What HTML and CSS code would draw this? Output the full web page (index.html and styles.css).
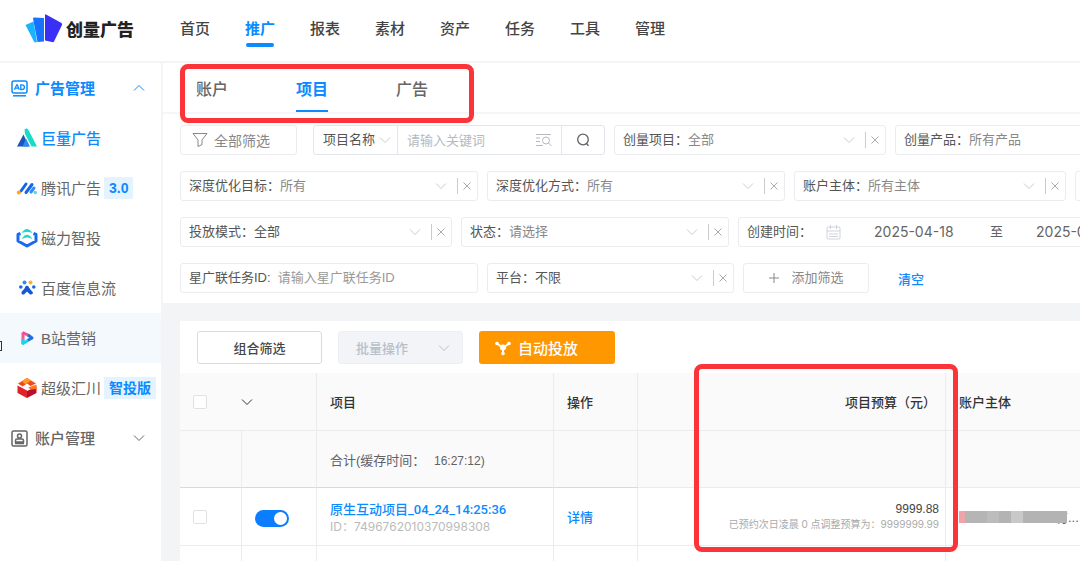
FILE: index.html
```html
<!DOCTYPE html>
<html lang="zh-CN">
<head>
  <meta charset="UTF-8" />
  <meta name="viewport" content="width=device-width, initial-scale=1" />
  <title>创量广告</title>
  <link rel="stylesheet" href="styles.css">
</head>
<body>

<!-- shared line icons -->
<svg class="sprite" aria-hidden="true">
  <symbol id="down" viewBox="0 0 12 12"><path d="M1 3.5l5 5 5-5" fill="none" stroke="currentColor"/></symbol>
  <symbol id="close" viewBox="0 0 12 12"><path d="M2.5 2.5l7 7M9.5 2.5l-7 7" fill="none" stroke="currentColor"/></symbol>
</svg>

<header class="topbar">
  <a class="logo" href="#">
    <svg width="38" height="30" viewBox="0 0 38 30" aria-hidden="true">
      <path d="M0.500 11L8.500 7.500L12 28L9.500 28.500z" fill="#18b4ff"/>
      <path d="M8 4.500Q8 3.500 9 3.500L19 4V27.500L12.500 28z" fill="#1672ff"/>
      <path d="M20 0.800Q20 0 21 0.500L36.500 9Q37.500 9.800 37 11L29 27.500Q28.500 28.500 27 28L20 26.500z" fill="#3a30f5"/>
    </svg>
    <span>创量广告</span>
  </a>
  <nav class="main-nav">
    <a href="#">首页</a>
    <a href="#" class="active">推广</a>
    <a href="#">报表</a>
    <a href="#">素材</a>
    <a href="#">资产</a>
    <a href="#">任务</a>
    <a href="#">工具</a>
    <a href="#">管理</a>
  </nav>
</header>

<div class="layout">
  <aside class="sidebar">
    <span class="edge-mark"></span>
    <button class="group open" type="button">
      <svg width="17" height="17" viewBox="0 0 17 17" fill="none" stroke="currentColor" stroke-width="1.500" aria-hidden="true">
        <rect x="1" y="1" width="15" height="12" rx="2"/>
        <path d="M2 15.800h13"/>
        <path d="M3.500 9.800l2.200-5h.600l2 5M4.500 8.200h3M9.800 4.800v4.700h1.200c3.200 0 3.200-4.700 0-4.700z" stroke-width="1.300"/>
      </svg>
      <span>广告管理</span>
      <svg class="arrow up" width="12" height="12"><use href="#down"/></svg>
    </button>
    <a class="item active" href="#">
      <svg width="22" height="22" viewBox="0 0 22 22" aria-hidden="true">
        <path d="M8.500 2.500Q10.500 0.500 12.500 3L21 19.500H15.500L9 7z" fill="#17dcc6"/>
        <path d="M1 19.500L7.500 7.500L13 19.500z" fill="#1c54b8"/>
        <path d="M6.500 19.500L10 11.500L14 19.500z" fill="#2b8bf0"/>
      </svg>
      <span>巨量广告</span>
    </a>
    <a class="item" href="#">
      <svg width="22" height="22" viewBox="0 0 22 22" fill="none" stroke-linecap="round" stroke-width="3" aria-hidden="true">
        <path d="M5 14l5-7M10 15.500l6-8" stroke="#1565e8"/>
        <path d="M15 15l3-4" stroke="#2b8df5"/>
        <circle cx="2.800" cy="15.500" r="2" fill="#ffa51f"/>
        <circle cx="19.300" cy="15.500" r="1.700" fill="#55d5f5"/>
      </svg>
      <span>腾讯广告</span>
      <em class="tag">3.0</em>
    </a>
    <a class="item" href="#">
      <svg width="22" height="22" viewBox="0 0 22 22" fill="none" stroke-linejoin="round" aria-hidden="true">
        <path d="M4.500 6.500L2 7.500V14L11 19L20 14V7.500L17.500 6.500" stroke="#1769f2" stroke-width="3"/>
        <path d="M5.500 6Q11-2 16.500 6Q11 4 5.500 6z" fill="#22d9cb"/>
        <path d="M5.500 12Q11 3.500 16.500 12Q11 9 5.500 12z" fill="#22d9cb"/>
      </svg>
      <span>磁力智投</span>
    </a>
    <a class="item" href="#">
      <svg width="22" height="22" viewBox="0 0 22 22" aria-hidden="true">
        <circle cx="8.500" cy="5.500" r="2" fill="#2d8cf0"/>
        <circle cx="14.500" cy="5.500" r="2" fill="#ffb02e"/>
        <circle cx="4.800" cy="10" r="1.800" fill="#1769e8"/>
        <circle cx="17.800" cy="10" r="1.800" fill="#1769e8"/>
        <path d="M11 8.500Q12.500 8.500 14 12L17 15.500Q17 18 14 17.500L11 14.500L8 17.500Q5 18 5.500 15L8.500 11.500Q9.500 8.500 11 8.500z" fill="#1458d4"/>
      </svg>
      <span>百度信息流</span>
    </a>
    <a class="item hover" href="#">
      <svg width="22" height="22" viewBox="0 0 22 22" fill="none" stroke-width="3" stroke-linejoin="round" aria-hidden="true">
        <path d="M7 17V5.500" stroke="#f5599a"/>
        <path d="M6.500 5.500L13 8.500" stroke="#f0508f"/>
        <path d="M12 8L16 11L11.500 13.500" stroke="#1c72dc"/>
        <path d="M12 13.500L7 16.500V12" stroke="#19d3ee"/>
      </svg>
      <span>B站营销</span>
    </a>
    <a class="item" href="#">
      <svg width="22" height="22" viewBox="0 0 22 22" aria-hidden="true">
        <path d="M2 6.500L11 1L20 6.500L14.500 9L11 6.500L6.500 9.500z" fill="#f04a1d"/>
        <path d="M6 4.200L11 1L15 3.500L9.500 7.500z" fill="#ff9a1f"/>
        <path d="M1.500 8.500L11 13.500V21L1.500 16z" fill="#e0222b"/>
        <path d="M20.500 9.500V16L11 21V14z" fill="#b90f2c"/>
        <path d="M12 10.500L20.500 7.500V12L15 12.500z" fill="#ff7420"/>
      </svg>
      <span>超级汇川</span>
      <em class="tag">智投版</em>
    </a>
    <button class="group" type="button">
      <svg width="17" height="17" viewBox="0 0 17 17" fill="none" stroke="currentColor" stroke-width="1.500" aria-hidden="true">
        <rect x="1" y="1" width="15" height="15" rx="1.500"/>
        <circle cx="8.500" cy="6" r="2"/>
        <path d="M4.500 12V10.500Q4.500 9 6 9h5q1.500 0 1.500 1.500V12zM4 13.500h9"/>
      </svg>
      <span>账户管理</span>
      <svg class="arrow" width="12" height="12"><use href="#down"/></svg>
    </button>
  </aside>

  <main class="content">
    <nav class="tabs">
      <a href="#">账户</a>
      <a href="#" class="active">项目</a>
      <a href="#">广告</a>
      <span class="mark mark-tabs"></span>
    </nav>

    <form class="filters">
      <div class="filter-row">
        <button class="all-filter" type="button">
          <svg width="16" height="16" viewBox="0 0 16 16" fill="none" stroke="currentColor" aria-hidden="true"><path d="M1 1.500h14L10 8v4.500L6 14.500V8z"/></svg>
          <span>全部筛选</span>
        </button>
        <div class="search">
          <select class="search-field" aria-label="搜索字段"><option>项目名称</option></select>
          <svg class="icon pale" width="12" height="12"><use href="#down"/></svg>
          <input class="search-text" type="text" placeholder="请输入关键词" aria-label="关键词">
          <svg class="icon-batch" width="16" height="14" viewBox="0 0 16 14" fill="none" stroke="currentColor" aria-hidden="true">
            <path d="M0 1.500h15M0 5h4M0 8.500h4M0 12.500h7"/><circle cx="10" cy="7.500" r="3.500"/><path d="M12.500 10l3 3"/>
          </svg>
          <button class="search-btn" type="button" aria-label="搜索">
            <svg width="14" height="14" viewBox="0 0 14 14" fill="none" stroke="currentColor" stroke-width="1.300" aria-hidden="true"><circle cx="7" cy="6.500" r="5.300"/><path d="M10.500 10.500l2 2.200"/></svg>
          </button>
        </div>
        <div class="filter w-md">
          <label for="f-project">创量项目：</label>
          <select id="f-project"><option>全部</option></select>
          <svg class="icon pale" width="12" height="12"><use href="#down"/></svg>
          <button class="clear" type="button" aria-label="清除"><svg width="12" height="12"><use href="#close"/></svg></button>
        </div>
        <div class="filter w-lg">
          <label for="f-product">创量产品：</label>
          <select id="f-product"><option>所有产品</option></select>
        </div>
      </div>

      <div class="filter-row">
        <div class="filter w-lg">
          <label for="f-target">深度优化目标：</label>
          <select id="f-target"><option>所有</option></select>
          <svg class="icon pale" width="12" height="12"><use href="#down"/></svg>
          <button class="clear" type="button" aria-label="清除"><svg width="12" height="12"><use href="#close"/></svg></button>
        </div>
        <div class="filter w-lg">
          <label for="f-mode">深度优化方式：</label>
          <select id="f-mode"><option>所有</option></select>
          <svg class="icon pale" width="12" height="12"><use href="#down"/></svg>
          <button class="clear" type="button" aria-label="清除"><svg width="12" height="12"><use href="#close"/></svg></button>
        </div>
        <div class="filter w-md">
          <label for="f-owner">账户主体：</label>
          <select id="f-owner"><option>所有主体</option></select>
          <svg class="icon pale" width="12" height="12"><use href="#down"/></svg>
          <button class="clear" type="button" aria-label="清除"><svg width="12" height="12"><use href="#close"/></svg></button>
        </div>
        <div class="filter w-md"></div>
      </div>

      <div class="filter-row">
        <div class="filter w-md">
          <label for="f-launch">投放模式：</label>
          <select id="f-launch" class="chosen"><option>全部</option></select>
          <svg class="icon pale" width="12" height="12"><use href="#down"/></svg>
          <button class="clear" type="button" aria-label="清除"><svg width="12" height="12"><use href="#close"/></svg></button>
        </div>
        <div class="filter w-status">
          <label for="f-status">状态：</label>
          <select id="f-status"><option>请选择</option></select>
          <svg class="icon pale" width="12" height="12"><use href="#down"/></svg>
          <button class="clear" type="button" aria-label="清除"><svg width="12" height="12"><use href="#close"/></svg></button>
        </div>
        <div class="filter date-range">
          <label for="f-from">创建时间：</label>
          <svg class="calendar" width="15" height="15" viewBox="0 0 15 15" fill="none" stroke="currentColor" aria-hidden="true"><rect x="1" y="2" width="13" height="12" rx="1"/><path d="M1 6h13M4.500 0v4M10.500 0v4M3 9h9M3 11.500h9"/></svg>
          <input id="f-from" type="text" value="2025-04-18">
          <span>至</span>
          <input type="text" value="2025-04-24" aria-label="结束时间">
        </div>
      </div>

      <div class="filter-row">
        <div class="filter w-lg">
          <label for="f-task">星广联任务ID:</label>
          <input id="f-task" type="text" placeholder="请输入星广联任务ID">
        </div>
        <div class="filter w-sm">
          <label for="f-platform">平台：</label>
          <select id="f-platform" class="chosen"><option>不限</option></select>
          <svg class="icon pale" width="12" height="12"><use href="#down"/></svg>
          <button class="clear" type="button" aria-label="清除"><svg width="12" height="12"><use href="#close"/></svg></button>
        </div>
        <button class="add-filter" type="button">
          <svg width="12" height="12" viewBox="0 0 12 12" stroke="currentColor" aria-hidden="true"><path d="M6 1v10M1 6h10"/></svg>
          <span>添加筛选</span>
        </button>
        <button class="reset" type="reset"><span>清空</span></button>
      </div>
    </form>

    <section class="card">
      <div class="toolbar">
        <button class="btn" type="button">组合筛选</button>
        <button class="btn batch" type="button" disabled>批量操作 <svg width="12" height="12"><use href="#down"/></svg></button>
        <button class="btn auto" type="button">
          <svg width="16" height="16" viewBox="0 0 16 16" aria-hidden="true">
            <path d="M2 3.500L8 8L14 3.500M8 8v6" fill="none" stroke="#fff" stroke-width="2"/>
            <circle cx="2" cy="3.500" r="1.800" fill="#fff"/><circle cx="14" cy="3.500" r="1.800" fill="#fff"/><circle cx="8" cy="13.500" r="1.800" fill="#fff"/><circle cx="8" cy="7.500" r="3" fill="#fff"/>
          </svg>
          自动投放
        </button>
      </div>

      <div class="table-wrap">
        <table>
          <colgroup>
            <col class="c-check"><col class="c-switch"><col class="c-name"><col class="c-op"><col class="c-budget"><col>
          </colgroup>
          <thead>
            <tr>
              <th colspan="2">
                <div class="check-head">
                  <input type="checkbox" aria-label="全选">
                  <svg width="12" height="12"><use href="#down"/></svg>
                </div>
              </th>
              <th>项目</th>
              <th>操作</th>
              <th class="budget-head">项目预算（元）</th>
              <th>账户主体</th>
            </tr>
          </thead>
          <tbody>
            <tr class="total">
              <td></td>
              <td></td>
              <td>合计(缓存时间： <span class="time">16:27:12)</span></td>
              <td></td>
              <td></td>
              <td></td>
            </tr>
            <tr>
              <td class="check"><input type="checkbox" aria-label="选择项目"></td>
              <td class="toggle"><input class="switch" type="checkbox" role="switch" aria-label="启用" checked></td>
              <td>
                <a class="name" href="#">原生互动项目_04_24_14:25:36</a>
                <div class="id">ID：7496762010370998308</div>
              </td>
              <td><a href="#">详情</a></td>
              <td class="budget">
                <div class="amount">9999.88</div>
                <div class="note">已预约次日凌晨 0 点调整预算为：9999999.99</div>
              </td>
              <td class="owner"><div><i class="mosaic"></i><span>有...</span></div></td>
            </tr>
            <tr>
              <td></td>
              <td></td>
              <td></td>
              <td></td>
              <td></td>
              <td></td>
            </tr>
          </tbody>
        </table>
        <span class="mark mark-budget"></span>
      </div>
    </section>
  </main>
</div>

</body>
</html>
```
FILE: styles.css
```css
* { box-sizing: border-box; }
body {
  margin: 0;
  height: 100vh;
  overflow: hidden;
  display: flex;
  flex-direction: column;
  font-family: "Liberation Sans", "Noto Sans CJK SC", sans-serif;
  font-size: 13px;
  color: #606266;
  background: #fff;
}
a { color: #0b8bff; text-decoration: none; }
button, input, select {
  font: inherit;
  color: inherit;
  margin: 0;
  padding: 0;
  border: none;
  background: none;
}
select { appearance: none; }
input[type="text"] { min-width: 0; }
button { cursor: pointer; }
svg { flex: none; }
.sprite { position: absolute; width: 0; height: 0; }

/* top bar */
.topbar {
  height: 63px;
  flex: none;
  display: flex;
  align-items: center;
  padding-bottom: 3px;
  border-bottom: 2px solid #f3f4f5;
}
.logo {
  width: 180px;
  padding-left: 25px;
  display: flex;
  align-items: center;
  gap: 3px;
  color: #222;
  font-size: 17px;
  font-weight: 900;
}
.logo span { padding-bottom: 2px; }
.main-nav { display: flex; gap: 35px; }
.main-nav a {
  position: relative;
  line-height: 34px;
  font-size: 15px;
  font-weight: 500;
  color: #444;
  white-space: nowrap;
}
.main-nav .active { color: #0b8bff; font-weight: bold; }
.main-nav .active::after {
  content: "";
  position: absolute;
  left: 1px;
  right: 1px;
  bottom: -1px;
  height: 4px;
  border-radius: 2px;
  background: #0b8bff;
}

/* sidebar */
.layout { flex: 1; display: flex; min-height: 0; }
.sidebar {
  position: relative;
  width: 163px;
  flex: none;
  border-right: 2px solid #f3f4f5;
}
.group, .item {
  width: 100%;
  height: 50px;
  display: flex;
  align-items: center;
  font-size: 15px;
  color: #666;
  white-space: nowrap;
}
.group span, .item span { padding-bottom: 2px; }
.group { padding: 0 16px 0 11px; gap: 7px; font-weight: 500; }
.group.open { color: #0b8bff; font-weight: bold; }
.arrow { margin-left: auto; }
.arrow.up { transform: rotate(180deg); }
.item { padding-left: 16px; gap: 3px; }
.item.active { color: #0b8bff; font-weight: 500; }
.item.hover { background: #f3f9fd; }
.tag {
  padding: 0 5px;
  line-height: 22px;
  font-size: 14px;
  font-style: normal;
  font-weight: bold;
  color: #0b8bff;
  background: #e5f3ff;
}
.edge-mark {
  position: absolute;
  left: -6px;
  top: 278px;
  width: 8px;
  height: 10px;
  border: 1px solid #333;
}

/* tabs */
.content {
  flex: 1;
  min-width: 0;
  overflow: hidden;
  background: #f3f4f6;
}
.tabs {
  position: relative;
  display: flex;
  gap: 68px;
  padding-left: 33px;
  background: #fff;
  border-bottom: 2px solid #f5f6f7;
}
.tabs a {
  height: 49px;
  padding-top: 4px;
  line-height: 46px;
  font-size: 16px;
  font-weight: 500;
  color: #666;
  border-bottom: 2px solid transparent;
}
.tabs .active { color: #0b8bff; font-weight: bold; border-color: #0b8bff; }
.mark {
  position: absolute;
  border: 5px solid #fb3439;
  border-radius: 8px;
  pointer-events: none;
}
.mark-tabs { left: 17px; top: 1px; width: 294px; height: 59px; }

/* filters */
.filters {
  display: flex;
  flex-direction: column;
  gap: 16px;
  padding: 11px 0 10px 17px;
  background: #fff;
}
.filter-row { display: flex; gap: 9px; }
.filter-row > * { flex: none; height: 30px; }
.filter, .search, .all-filter, .add-filter {
  display: flex;
  align-items: center;
  border: 1px solid #ebecef;
  border-radius: 3px;
  white-space: nowrap;
}
.filter { padding-left: 8px; }
.filter label, .filter span, .add-filter span, .reset span { padding-bottom: 3px; }
.filter select, .filter input, .search-field { padding-bottom: 2px; }
.filter label { color: #555; }
.filter select, .filter input { flex: 1; color: #888; }
.filter select.chosen { color: #555; }
.filter input::placeholder { color: #999; }
.filter #f-task { margin-left: 7px; }
.w-lg { width: 298px; }
.w-md { width: 272px; }
.w-status { width: 268px; }
.w-sm { width: 247px; }
.pale { color: #c8cbd0; }
.clear {
  margin-left: 10px;
  padding: 0 4px 0 3px;
  height: 16px;
  border-left: 1px solid #ccc;
  color: #aaa;
}
.clear svg { display: block; }
.all-filter {
  width: 117px;
  margin-right: 7px;
  padding-left: 11px;
  gap: 6px;
  font-size: 14px;
  color: #888;
}
.search { width: 292px; border-color: #e3e6eb; }
.search-field { width: 56px; margin-left: 9px; color: #555; }
.search-text {
  flex: 1;
  height: 100%;
  margin-left: 6px;
  padding-left: 9px;
  border-left: 1px solid #e3e6eb;
}
.search-text::placeholder { color: #b5b9c0; }
.icon-batch { margin-right: 9px; color: #b5b9c0; }
.search-btn {
  width: 43px;
  height: 100%;
  border-left: 1px solid #e3e6eb;
}
.search-btn svg { display: block; margin: auto; }
.date-range { width: 420px; }
.date-range .calendar { margin: 0 33px 0 14px; color: #d0d3d8; }
.date-range input {
  flex: none;
  width: 116px;
  font-family: Inter, "Noto Sans CJK SC", sans-serif;
  font-size: 14px;
  color: #666;
}
.date-range span { width: 46px; }
.add-filter { width: 126px; justify-content: center; gap: 11px; color: #888; }
.reset { margin-left: 20px; color: #0b8bff; font-weight: 500; }

/* table card */
.card { margin: 18px 0 0 17px; background: #fff; }
.toolbar { display: flex; gap: 16px; padding: 10px 17px 9px; }
.btn {
  width: 125px;
  height: 33px;
  display: flex;
  align-items: center;
  justify-content: center;
  border: 1px solid #d9dbdf;
  border-radius: 3px;
  color: #444;
  font-weight: 500;
}
.batch {
  justify-content: space-between;
  padding: 0 12px 0 17px;
  border-color: #eceff4;
  background: #f2f4f8;
  color: #b9bfca;
}
.auto {
  width: 136px;
  justify-content: flex-start;
  gap: 7px;
  padding-left: 16px;
  border: none;
  background: #ff9800;
  color: #fff;
  font-size: 15px;
}
.table-wrap { position: relative; }
table {
  width: 100%;
  table-layout: fixed;
  border-collapse: separate;
  border-spacing: 0;
}
.c-check { width: 62px; }
.c-switch { width: 75px; }
.c-name { width: 237px; }
.c-op { width: 84px; }
.c-budget { width: 308px; }
th, td {
  height: 58px;
  padding: 0 13px;
  text-align: left;
  font-weight: normal;
  border-right: 1px solid #ebecee;
  border-bottom: 1px solid #ebecee;
  white-space: nowrap;
}
th:last-child, td:last-child { border-right: none; }
th { font-weight: 500; color: #333; background: #fafafa; }
.total td { height: 57px; background: #fafafa; }
.total td:nth-child(-n+4) { border-bottom-color: #d8dadd; }
.time { margin-left: 5px; font-size: 12px; }
.check-head { display: flex; align-items: center; gap: 34px; }
input[type="checkbox"] {
  appearance: none;
  display: block;
  width: 14px;
  height: 14px;
  border: 1px solid #dfe1e5;
  border-radius: 2px;
  background: #fff;
}
input.switch {
  width: 34px;
  height: 17px;
  padding: 2px;
  border: none;
  border-radius: 9px;
  background: #0b7dff;
}
.switch::before {
  content: "";
  display: block;
  width: 13px;
  height: 13px;
  margin-left: auto;
  border-radius: 50%;
  background: #fff;
}
td.toggle { padding-top: 4px; }
td a { font-weight: 500; }
.name { font-family: Roboto, "Noto Sans CJK SC", sans-serif; }
.id {
  font-family: Inter, "Noto Sans CJK SC", sans-serif;
  font-size: 12px;
  line-height: 17px;
  color: #bbb;
}
th.budget-head { padding-right: 9px; text-align: right; }
td.budget { padding: 0 6px; text-align: right; }
.amount { font-size: 12px; color: #444; }
.note {
  font-family: Inter, "Noto Sans CJK SC", sans-serif;
  font-size: 10px;
  color: #aaa;
}
.owner div { display: flex; align-items: center; }
/* censored account name */
.mosaic {
  position: relative;
  flex: none;
  width: 108px;
  height: 12px;
  background: linear-gradient(90deg, #efa5a8 6px, #b5b5b5 6px, #b5b5b5 28px, #bcbcbc 28px, #bcbcbc 40px, #b3b3b3 40px, #b3b3b3 52px, #c8c8c8 52px, #c8c8c8 64px, #b3b3b3 64px);
}
.owner span { margin-left: -12px; }
.mark-budget { left: 514px; top: -9px; width: 264px; height: 188px; }
```
